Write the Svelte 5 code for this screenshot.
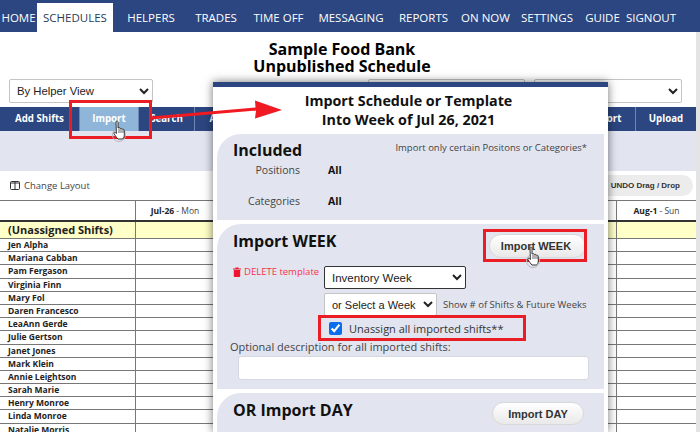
<script>
const navItems = [
  { label: 'HOME', width: 37 },
  { label: 'SCHEDULES', width: 76, active: true },
  { label: 'HELPERS', width: 76 },
  { label: 'TRADES', width: 54 },
  { label: 'TIME OFF', width: 71 },
  { label: 'MESSAGING', width: 74 },
  { label: 'REPORTS', width: 71 },
  { label: 'ON NOW', width: 53 },
  { label: 'SETTINGS', width: 70 },
  { label: 'GUIDE', width: 41 },
  { label: 'SIGNOUT', width: 56 }
];

const tools = [
  { label: 'Add Shifts', width: 80 },
  { label: 'Import', width: 59, active: true },
  { label: 'Search', width: 56 },
  { label: 'Assign', width: 61 },
  { label: 'Copy', width: 100 },
  { label: 'Print', width: 100 },
  { label: 'Publish', width: 120 },
  { label: 'Export', width: 60 },
  { label: 'Upload', width: 60 }
];

const helpers = [
  'Jen Alpha', 'Mariana Cabban', 'Pam Fergason', 'Virginia Finn', 'Mary Fol',
  'Daren Francesco', 'LeaAnn Gerde', 'Julie Gertson', 'Janet Jones', 'Mark Klein',
  'Annie Leightson', 'Sarah Marie', 'Henry Monroe', 'Linda Monroe', 'Natalie Morris'
];
</script>

<div class="page">
  <nav class="nav">
    {#each navItems as item}
      <div class="nav-item" class:active={item.active} style="width: {item.width}px">{item.label}</div>
    {/each}
  </nav>

  <header class="title">
    <div>Sample Food Bank</div>
    <div>Unpublished Schedule</div>
  </header>

  <div class="filters">
    <select class="view-select"><option>By Helper View</option></select>
    <select class="mid-select"><option></option></select>
    <select class="last-select"><option></option></select>
  </div>

  <div class="toolbar">
    {#each tools as tool}
      <div class="tool" class:active={tool.active} style="width: {tool.width}px">{tool.label}</div>
    {/each}
  </div>

  <div class="band"></div>

  <div class="layout-row">
    <div class="change-layout">
      <svg width="10" height="9" viewBox="0 0 10 9" fill="none" stroke="#333" stroke-width="1">
        <rect x=".5" y=".5" width="9" height="8" rx="1" />
        <path d="M5 .5v8M.5 2h9" />
      </svg>
      Change Layout
    </div>
    <div class="undo">UNDO Drag / Drop</div>
  </div>

  <div class="table">
    <div class="row head">
      <div class="name"></div>
      <div class="day first"><b>Jul-26</b> - Mon</div>
      <div class="day last"><b>Aug-1</b> - Sun</div>
    </div>
    <div class="row unassigned">
      <div class="name">(Unassigned Shifts)</div>
      <div class="day first"></div>
      <div class="day last"></div>
    </div>
    {#each helpers as helper}
      <div class="row helper">
        <div class="name">{helper}</div>
        <div class="day first"></div>
        <div class="day last"></div>
      </div>
    {/each}
  </div>

  <div class="scrollbar"></div>

  <div class="modal">
    <div class="modal-title">
      <div>Import Schedule or Template</div>
      <div>Into Week of Jul 26, 2021</div>
    </div>

    <section class="panel included">
      <div class="panel-top">
        <h2>Included</h2>
        <span class="hint">Import only certain Positons or Categories*</span>
      </div>
      <div class="pair first-pair"><span class="key">Positions</span><b>All</b></div>
      <div class="pair"><span class="key">Categories</span><b>All</b></div>
    </section>

    <section class="panel week">
      <div class="panel-top">
        <h2>Import WEEK</h2>
        <button class="pill week-btn">Import WEEK</button>
      </div>
      <div class="form-row">
        <span class="delete">
          <svg width="8" height="10" viewBox="0 0 8 10" fill="#f0142f">
            <path d="M0 1.500h2.500V.5h3v1H8v1H0zM.8 3h6.400v6a1 1 0 0 1-1 1H1.800a1 1 0 0 1-1-1z" />
          </svg>
          DELETE template
        </span>
        <select class="template"><option>Inventory Week</option></select>
      </div>
      <div class="form-row second">
        <select class="pick-week"><option>or Select a Week</option></select>
        <span class="show">Show # of Shifts &amp; Future Weeks</span>
      </div>
      <label class="unassign">
        <input type="checkbox" checked />
        Unassign all imported shifts**
      </label>
      <div class="optional">Optional description for all imported shifts:</div>
      <input class="description" type="text" />
    </section>

    <section class="panel day-panel">
      <div class="panel-top">
        <h2>OR Import DAY</h2>
        <button class="pill day-btn">Import DAY</button>
      </div>
    </section>
  </div>

  <!-- annotations drawn on top of the screenshot -->
  <div class="callout import-box"></div>
  <div class="callout week-box"></div>
  <div class="callout unassign-box"></div>
  <svg class="arrow" width="700" height="432" viewBox="0 0 700 432">
    <path d="M151 119.500L256 110.500 255 118.500 282 110 255 100.500 255.500 107.500 151 116.500z" fill="#f01a22" />
  </svg>

  <svg class="cursor c1" width="18" height="22" viewBox="0 0 18 22">
    <circle cx="7" cy="15" r="6.500" fill="none" stroke="#b8b8b8" stroke-width="1" />
    <path d="M4 1.500c1-.8 2-.3 2 1V8l1-.2c1-.1 1.500.2 1.600.8 1-.3 1.700 0 1.900.7 1-.2 1.800.2 1.800 1.200V15c0 2-1 3.500-2 4H6c-1-1-3-3.500-4-5.500-.4-1 .6-1.800 1.500-1l.9 1z" fill="#fff" stroke="#222" stroke-width=".9" />
    <path d="M7 9v4M9 9v4M11 10v3" stroke="#222" stroke-width=".7" />
  </svg>
  <svg class="cursor c2" width="18" height="22" viewBox="0 0 18 22">
    <circle cx="7" cy="15" r="6.500" fill="none" stroke="#b8b8b8" stroke-width="1" />
    <path d="M4 1.500c1-.8 2-.3 2 1V8l1-.2c1-.1 1.500.2 1.600.8 1-.3 1.700 0 1.900.7 1-.2 1.800.2 1.800 1.200V15c0 2-1 3.500-2 4H6c-1-1-3-3.500-4-5.500-.4-1 .6-1.800 1.500-1l.9 1z" fill="#fff" stroke="#222" stroke-width=".9" />
    <path d="M7 9v4M9 9v4M11 10v3" stroke="#222" stroke-width=".7" />
  </svg>
</div>

<style>
  :global(body) {
    margin: 0;
    background: #fff;
  }

  .page {
    position: relative;
    width: 700px;
    height: 432px;
    overflow: hidden;
    font-family: "Open Sans", "Liberation Sans", sans-serif;
    color: #111;
  }

  .nav {
    display: flex;
    align-items: flex-end;
    height: 32px;
    background: #2b4680;
    box-sizing: border-box;
    padding-top: 3px;
  }

  .nav-item {
    height: 29px;
    line-height: 30px;
    text-align: center;
    font-size: 11.5px;
    color: #fff;
    white-space: nowrap;
    flex: none;
  }

  .nav-item.active {
    background: #fff;
    color: #2b3a55;
  }

  .title {
    padding-top: 9px;
    height: 38px;
    text-align: center;
    font-size: 16px;
    font-weight: 700;
    line-height: 17px;
    color: #000;
    padding-right: 16px;
  }

  .filters {
    display: flex;
    padding-left: 9px;
    height: 28px;
  }

  select {
    font-family: "Liberation Sans", sans-serif;
    background: #fff;
    color: #222;
    box-sizing: border-box;
    border: 1px solid #c4c4c4;
    border-radius: 2px;
  }

  .view-select {
    width: 144px;
    height: 24px;
    font-size: 11.300px;
    padding-left: 3px;
    margin-right: 215px;
  }

  .mid-select {
    width: 157px;
    height: 24px;
    margin-right: 9px;
  }

  .last-select {
    width: 148px;
    height: 24px;
  }

  .toolbar {
    display: flex;
    width: 696px;
    height: 24px;
    background: #2b4680;
  }

  .tool {
    box-sizing: border-box;
    flex: none;
    text-align: center;
    line-height: 24px;
    font-size: 9.700px;
    font-weight: 700;
    color: #fff;
    border-right: 1px solid #6f86b0;
  }

  .tool:last-child {
    border-right: none;
  }

  .tool.active {
    background: #8fb6d8;
  }

  .band {
    width: 696px;
    height: 40px;
    background: #e2e5f0;
  }

  .layout-row {
    display: flex;
    align-items: center;
    justify-content: space-between;
    width: 696px;
    height: 29px;
  }

  .change-layout {
    display: flex;
    align-items: center;
    gap: 4px;
    margin-left: 10px;
    font-size: 9.500px;
    color: #444;
  }

  .undo {
    width: 93px;
    height: 21px;
    margin-right: 3px;
    line-height: 21px;
    border-radius: 0 11px 11px 0;
    background: #ececec;
    text-align: right;
    padding-right: 13px;
    box-sizing: border-box;
    font-family: "Liberation Sans", sans-serif;
    font-size: 8px;
    font-weight: 700;
    color: #333;
  }

  .table {
    width: 696px;
    border-top: 1px solid #777;
  }

  .row {
    display: flex;
    box-sizing: border-box;
    border-bottom: 1px solid #777;
  }

  .name {
    width: 135px;
    flex: none;
    box-sizing: border-box;
    padding-left: 8px;
    font-weight: 700;
  }

  .day {
    box-sizing: border-box;
    text-align: center;
  }

  .day.first {
    width: 481px;
    flex: none;
    border-left: 1px solid #777;
    padding-right: 402px;
    white-space: nowrap;
  }

  .day.last {
    flex: 1;
    border-left: 1px solid #777;
  }

  .head {
    height: 21px;
    line-height: 20px;
    font-size: 8.500px;
    color: #444;
    border-bottom: 2px solid #333;
  }

  .head b {
    color: #222;
  }

  .unassigned {
    height: 17px;
    line-height: 16px;
    background: #ffffc8;
    font-size: 11px;
    color: #222;
  }

  .helper {
    height: 13.200px;
    line-height: 12px;
    font-size: 8.500px;
    color: #222;
  }

  .scrollbar {
    position: absolute;
    top: 32px;
    right: 0;
    width: 4px;
    height: 400px;
    background: #e4e4e4;
  }

  .modal {
    position: absolute;
    left: 213px;
    top: 82px;
    width: 395px;
    height: 350px;
    box-sizing: border-box;
    padding: 0 4px;
    background: #fff;
    border-top: 5px solid #2b4680;
    box-shadow: 0 0 9px rgba(0, 0, 0, 0.55);
  }

  .modal-title {
    padding: 4px 4px 0 0;
    height: 43px;
    text-align: center;
    font-size: 14.300px;
    font-weight: 700;
    line-height: 19px;
    color: #111;
  }

  .panel {
    box-sizing: border-box;
    background: #e2e5f0;
    border-radius: 24px 0 0 0;
    padding: 0 16px;
    margin-bottom: 4px;
  }

  .panel-top {
    display: flex;
    justify-content: space-between;
  }

  h2 {
    margin: 0;
    font-size: 16px;
    font-weight: 700;
    color: #111;
  }

  .included {
    height: 86px;
    padding-top: 5px;
  }

  .included h2 {
    line-height: 22px;
  }

  .hint {
    font-size: 9.500px;
    color: #444;
    line-height: 18px;
    margin-right: 1px;
  }

  .pair {
    display: flex;
    align-items: center;
    height: 31px;
    font-size: 10.500px;
  }

  .first-pair {
    margin-top: -7px;
  }

  .key {
    width: 67px;
    margin-right: 28px;
    text-align: right;
    color: #444;
  }

  .week {
    height: 165px;
  }

  .week .panel-top {
    height: 42px;
    align-items: flex-start;
  }

  .week h2 {
    line-height: 22px;
    margin-top: 6px;
  }

  .pill {
    border: 1px solid #d8d8d8;
    border-radius: 12px;
    background: linear-gradient(#fff, #e9e9e9);
    font-family: "Liberation Sans", sans-serif;
    font-size: 11px;
    font-weight: 700;
    color: #333;
    padding: 0;
  }

  .week-btn {
    width: 97px;
    height: 24px;
    margin-top: 10px;
    margin-right: 2px;
    padding-right: 3px;
  }

  .form-row {
    display: flex;
    align-items: center;
  }

  .delete {
    display: flex;
    align-items: center;
    align-self: flex-start;
    gap: 3px;
    width: 91px;
    line-height: 11px;
    font-size: 9.500px;
    color: #f5334a;
    white-space: nowrap;
  }

  .template {
    width: 142px;
    height: 23px;
    font-size: 11.500px;
    padding-left: 3px;
    border: 1px solid #333;
  }

  .second {
    margin-top: 4px;
    margin-left: 91px;
  }

  .pick-week {
    width: 113px;
    height: 23px;
    font-size: 11px;
    padding-left: 3px;
  }

  .show {
    margin-left: 6px;
    font-size: 9.500px;
    color: #444;
    white-space: nowrap;
  }

  .unassign {
    display: flex;
    align-items: center;
    gap: 7px;
    height: 24px;
    margin-left: 96px;
    font-size: 11px;
    color: #333;
  }

  .unassign input {
    width: 13px;
    height: 13px;
    margin: 0;
    accent-color: #0a6df0;
  }

  .optional {
    margin-left: -3px;
    font-size: 11px;
    line-height: 14px;
    color: #444;
  }

  .description {
    display: block;
    box-sizing: border-box;
    width: 351px;
    height: 24px;
    margin: 2px 0 0 5px;
    background: #fff;
    border: 1px solid #d6d8e0;
    border-radius: 3px;
  }

  .day-panel {
    height: 60px;
  }

  .day-panel .panel-top {
    align-items: flex-start;
  }

  .day-panel h2 {
    line-height: 22px;
    margin-top: 6px;
  }

  .day-btn {
    width: 92px;
    height: 23px;
    margin-top: 9px;
    margin-right: 4px;
  }

  .callout {
    position: absolute;
    box-sizing: border-box;
    border: 3px solid #ea1c24;
  }

  .import-box {
    left: 69px;
    top: 100px;
    width: 83px;
    height: 39px;
  }

  .week-box {
    left: 483px;
    top: 229px;
    width: 104px;
    height: 33px;
  }

  .unassign-box {
    left: 318px;
    top: 315px;
    width: 208px;
    height: 26px;
  }

  .arrow {
    position: absolute;
    left: 0;
    top: 0;
  }

  .cursor {
    position: absolute;
  }

  .c1 {
    left: 112px;
    top: 120px;
  }

  .c2 {
    left: 526px;
    top: 246px;
  }
</style>
